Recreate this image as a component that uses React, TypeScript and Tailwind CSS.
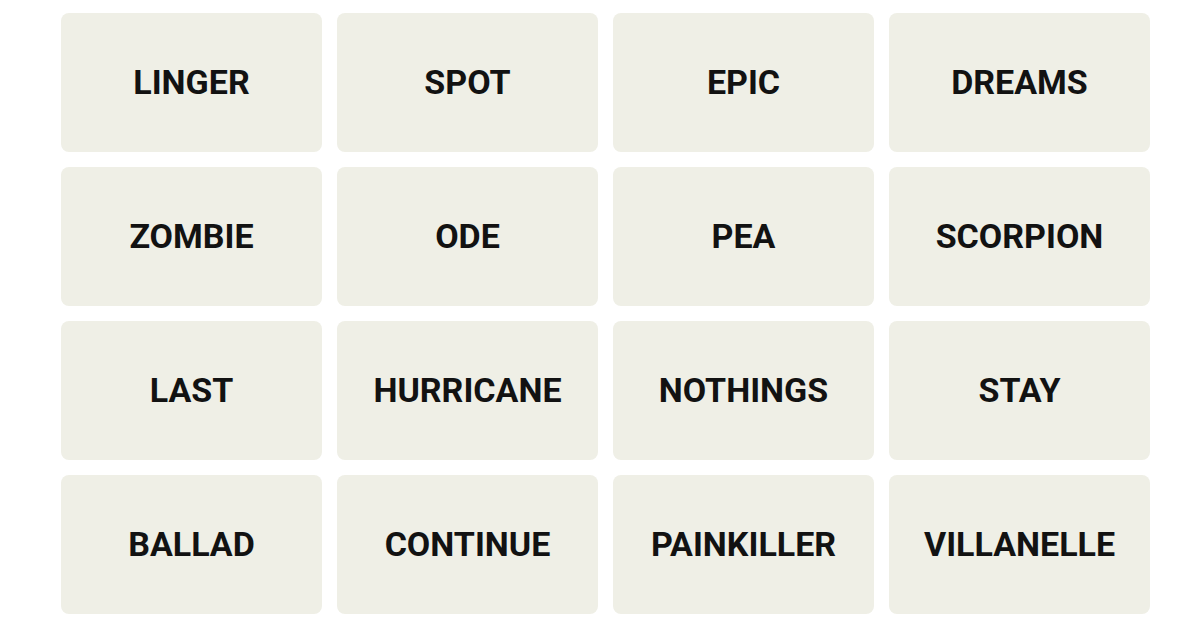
const words = [
  "LINGER", "SPOT", "EPIC", "DREAMS",
  "ZOMBIE", "ODE", "PEA", "SCORPION",
  "LAST", "HURRICANE", "NOTHINGS", "STAY",
  "BALLAD", "CONTINUE", "PAINKILLER", "VILLANELLE",
];

export default function App() {
  return (
    <div className="w-[1200px] h-[628px] bg-white pt-[13px] pl-[61px]">
      <div className="grid grid-cols-[repeat(4,261px)] grid-rows-[repeat(4,139px)] gap-[15px]">
        {words.map((word) => (
          <button
            key={word}
            className="flex items-center justify-center rounded-[8px] bg-[#efefe6] text-[34px] font-bold text-[#121212] font-['Roboto','Liberation_Sans',sans-serif]"
          >
            {word}
          </button>
        ))}
      </div>
    </div>
  );
}
